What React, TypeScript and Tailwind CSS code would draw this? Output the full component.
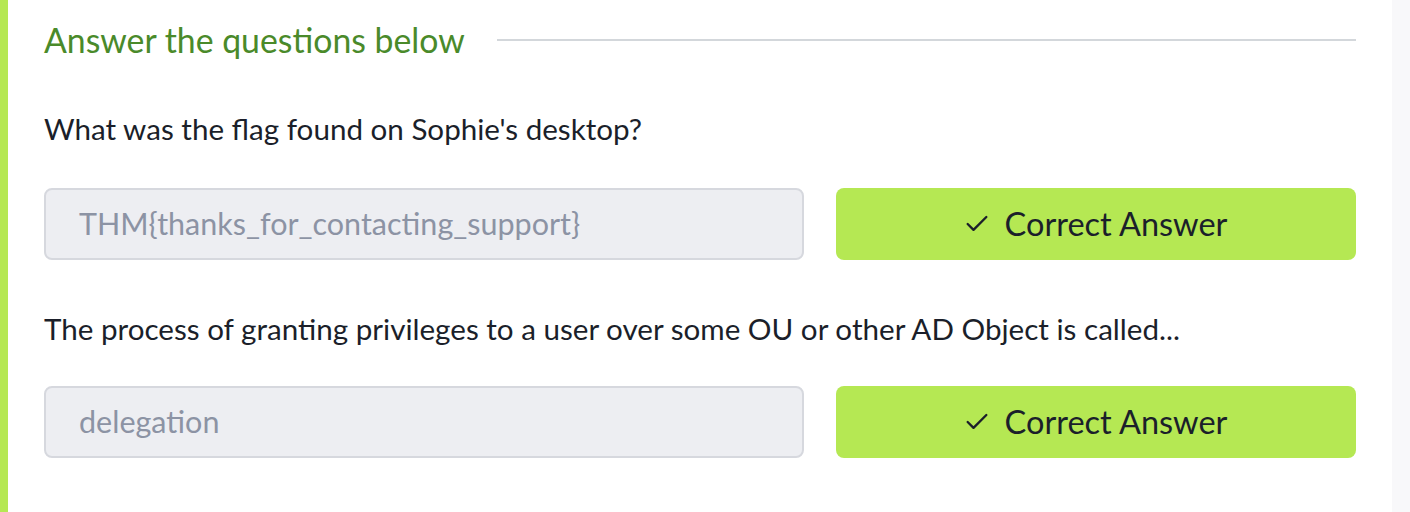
import { Check } from "lucide-react";

function AnswerRow({ value }: { value: string }) {
  return (
    <div className="flex gap-8">
      <div className="flex h-[72px] w-[760px] items-center rounded-lg border-2 border-[#d6d8de] bg-[#edeef2] pl-[33px] text-[30.5px] text-[#8c93a4]">
        {value}
      </div>
      <button className="flex h-[72px] w-[520px] items-center justify-center gap-[14px] rounded-lg bg-[#b5e853] pr-[2px] text-[32.5px] text-[#1b1f2a]">
        <Check size={28} strokeWidth={2} />
        <span>Correct Answer</span>
      </button>
    </div>
  );
}

export default function App() {
  return (
    <div className="flex h-[512px] w-[1410px] bg-[#f8f8fa] font-['Lato',sans-serif]">
      <div className="w-2 bg-[#b5e853]" />
      <section className="w-[1384px] bg-white pl-9 pr-9">
        <div className="flex h-[80px] items-center gap-8">
          <h3 className="text-[33.8px] leading-[40px] text-[#4a8a2a]">Answer the questions below</h3>
          <div className="h-[2px] flex-1 bg-[#d3d7db]" />
        </div>

        <p className="mt-[31px] text-[29.6px] leading-[36px] text-[#1b1f2a]">What was the flag found on Sophie's desktop?</p>
        <div className="mt-[41px]">
          <AnswerRow value="THM{thanks_for_contacting_support}" />
        </div>

        <p className="mt-[51px] text-[29.6px] leading-[36px] text-[#1b1f2a]">
          The process of granting privileges to a user over some OU or other AD Object is called...
        </p>
        <div className="mt-[39px]">
          <AnswerRow value="delegation" />
        </div>
      </section>
    </div>
  );
}
